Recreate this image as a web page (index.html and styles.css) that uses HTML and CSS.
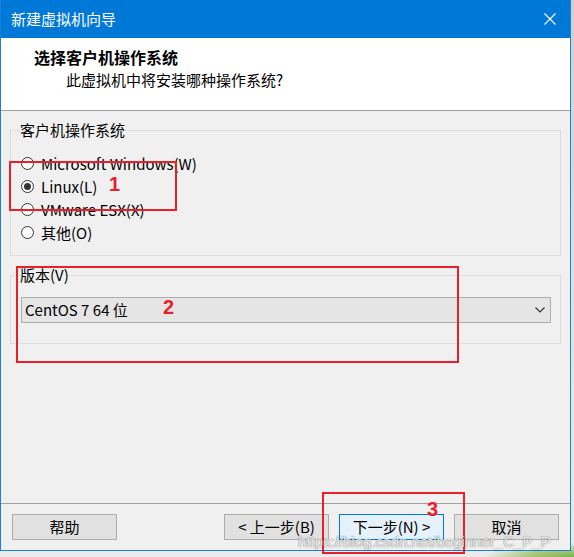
FILE: index.html
```html
<!DOCTYPE html>
<html lang="zh-CN">
<head>
<meta charset="utf-8">
<title>新建虚拟机向导</title>
<link rel="stylesheet" href="styles.css">
</head>
<body>
<div class="window">
  <div class="titlebar">
    <span class="title">新建虚拟机向导</span>
    <svg class="close" width="12" height="12" viewBox="0 0 12 12"><path d="M0.5 0.5 L11.5 11.5 M11.5 0.5 L0.5 11.5" stroke="#fff" stroke-width="1.1" fill="none"/></svg>
  </div>
  <div class="header">
    <div class="h-title">选择客户机操作系统</div>
    <div class="h-sub">此虚拟机中将安装哪种操作系统?</div>
  </div>
  <div class="content">
    <fieldset class="group os">
      <legend>客户机操作系统</legend>
      <div class="radio"><span class="circle"></span><span class="rlabel">Microsoft Windows(W)</span></div>
      <div class="radio"><span class="circle checked"></span><span class="rlabel">Linux(L)</span></div>
      <div class="radio"><span class="circle"></span><span class="rlabel">VMware ESX(X)</span></div>
      <div class="radio"><span class="circle"></span><span class="rlabel">其他(O)</span></div>
    </fieldset>
    <fieldset class="group ver">
      <legend>版本(V)</legend>
      <div class="combo">
        <span class="combo-text">CentOS 7 64 位</span>
        <svg class="chev" width="10" height="6" viewBox="0 0 10 6"><path d="M0.5 0.5 L5 5 L9.5 0.5" stroke="#333" stroke-width="1.1" fill="none"/></svg>
      </div>
    </fieldset>
  </div>
  <div class="footer">
    <button class="btn">帮助</button>
    <span class="spacer"></span>
    <button class="btn">&lt; 上一步(B)</button>
    <button class="btn primary">下一步(N) &gt;</button>
    <button class="btn">取消</button>
  </div>

  <div class="mark box1"></div>
  <div class="mark box2"></div>
  <div class="mark box3"></div>
  <span class="num n1">1</span>
  <span class="num n2">2</span>
  <span class="num n3">3</span>
  <span class="watermark">https://blog.csdn.net/beginner_C_P_P</span>
</div>
</body>
</html>
```

FILE: styles.css
```css
html, body {
  margin: 0;
  padding: 0;
}
body {
  width: 574px;
  height: 557px;
  overflow: hidden;
  background:
    radial-gradient(ellipse 90px 14px at 100% 100%, #7fb24a 0%, #a8c97a 50%, rgba(220,225,215,0) 100%),
    linear-gradient(to bottom, #cfcfcf 0%, #e3e3e3 60%, #ebebeb 100%);
  font-family: "Noto Sans CJK SC", "Noto Sans", sans-serif;
  font-size: 15px;
  color: #000;
}
.window {
  position: relative;
  width: 571px;
  height: 551px;
  box-sizing: border-box;
  border: 1px solid #1a7fd6;
  border-top: none;
  background: #f0f0f0;
  display: flex;
  flex-direction: column;
}
.titlebar {
  height: 38px;
  background: #0078d7;
  display: flex;
  align-items: center;
  justify-content: space-between;
  padding: 0 14px 0 10px;
  flex: none;
}
.title {
  color: #fff;
  font-size: 15px;
  line-height: 20px;
}
.close {
  display: block;
  margin-top: -1px;
}
.header {
  background: #fff;
  border-bottom: 1px solid #a0a0a0;
  padding: 9px 0 0 33px;
  box-sizing: border-box;
  height: 73px;
  flex: none;
}
.h-title {
  font-weight: bold;
  font-size: 16px;
  line-height: 20px;
}
.h-sub {
  margin-top: 3px;
  margin-left: 32px;
  font-size: 15px;
  line-height: 20px;
}
.content {
  flex: 1;
  padding: 0 9px;
}
.group {
  margin: 9px 0 0 0;
  padding: 12px 9px 11px 9px;
  border: 1px solid #dcdcdc;
  min-width: 0;
}
.group legend {
  padding: 0;
  font-size: 15px;
  line-height: 20px;
}
.radio {
  height: 23px;
  display: flex;
  align-items: center;
}
.circle {
  width: 13px;
  height: 13px;
  box-sizing: border-box;
  border: 1px solid #333;
  border-radius: 50%;
  background: #fff;
  margin-left: 1px;
  display: flex;
  align-items: center;
  justify-content: center;
}
.circle.checked::after {
  content: "";
  width: 7px;
  height: 7px;
  border-radius: 50%;
  background: #333;
}
.rlabel {
  margin-left: 7px;
  line-height: 20px;
}
.ver {
  padding-bottom: 20px;
}
.combo {
  margin-left: 1px;
  height: 26px;
  box-sizing: border-box;
  border: 1px solid #adadad;
  background: #e5e5e5;
  display: flex;
  align-items: center;
  justify-content: space-between;
  padding: 0 5px 0 3px;
}
.combo-text {
  line-height: 20px;
}
.chev {
  display: block;
}
.footer {
  flex: none;
  height: 47px;
  box-sizing: border-box;
  border-top: 1px solid #a0a0a0;
  padding: 10px 11px 0 11px;
  display: flex;
  align-items: flex-start;
  gap: 10px;
}
.spacer {
  flex: 1;
}
.btn {
  width: 105px;
  height: 26px;
  margin: 0;
  padding: 0;
  box-sizing: border-box;
  border: 1px solid #adadad;
  background: #e1e1e1;
  font-family: "Noto Sans CJK SC", "Noto Sans", sans-serif;
  font-size: 15px;
  line-height: 16px;
  color: #000;
}
.btn.primary {
  border-color: #0078d7;
  background: #e5f1fb;
}
.mark {
  position: absolute;
  box-sizing: border-box;
  border: 2px solid #e8202a;
}
.box1 { left: 8px; top: 161px; width: 168px; height: 50px; }
.box2 { left: 15px; top: 266px; width: 443px; height: 97px; }
.box3 { left: 321px; top: 492px; width: 143px; height: 62px; }
.num {
  position: absolute;
  font-family: "Liberation Sans", Arial, sans-serif;
  font-weight: bold;
  font-size: 20px;
  line-height: 20px;
  color: #e8202a;
}
.n1 { left: 108px; top: 174px; }
.n2 { left: 162px; top: 297px; }
.n3 { left: 426px; top: 499px; }
.watermark {
  position: absolute;
  left: 297px;
  top: 535px;
  font-family: "Liberation Sans", Arial, sans-serif;
  font-size: 15px;
  line-height: 14px;
  color: rgba(255, 255, 255, 0.85);
  text-shadow: 0 0 1px rgba(0, 0, 0, 0.5), 0 0 2px rgba(0, 0, 0, 0.25);
  white-space: nowrap;
}
```
